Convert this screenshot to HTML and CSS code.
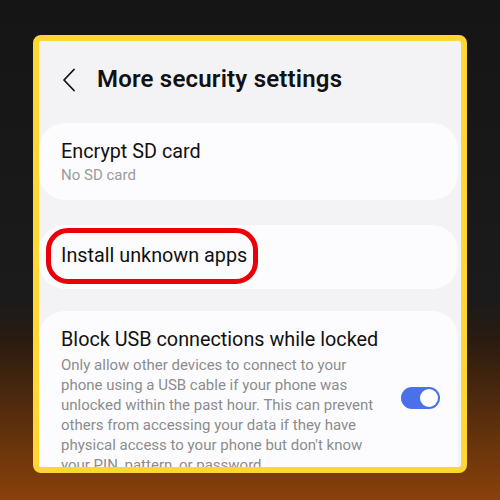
FILE: index.html
```html
<!DOCTYPE html>
<html>
<head>
  <title>More security settings</title>
  <link rel="stylesheet" href="styles.css">
</head>
<body>
  <div class="frame">
    <div class="screen">
      <div class="header">
        <svg class="back" width="14" height="24" viewBox="0 0 14 24">
          <path d="M12 1.5 L2 12 L12 22.5" fill="none" stroke="#111" stroke-width="1.8" stroke-linecap="round" stroke-linejoin="round"/>
        </svg>
        <h1>More security settings</h1>
      </div>

      <div class="card">
        <div class="item-title">Encrypt SD card</div>
        <div class="item-sub">No SD card</div>
      </div>

      <div class="card card-single">
        <div class="highlight">
          <div class="item-title">Install unknown apps</div>
        </div>
      </div>

      <div class="card card-last">
        <div class="row">
          <div class="text">
            <div class="item-title">Block USB connections while locked</div>
            <div class="item-desc">Only allow other devices to connect to your phone using a USB cable if your phone was unlocked within the past hour. This can prevent others from accessing your data if they have physical access to your phone but don't know your PIN, pattern, or password.</div>
          </div>
          <div class="switch"><span class="knob"></span></div>
        </div>
      </div>
    </div>
  </div>
</body>
</html>
```

FILE: styles.css
```css
html, body {
  margin: 0;
  height: 100%;
}
body {
  font-family: Roboto, "Noto Sans", Arial, sans-serif;
  background: linear-gradient(180deg, #151515 0%, #1b1b1b 60%, #2a1b10 68%, #572d0d 83%, #8a410a 100%);
  padding-top: 35px;
  padding-left: 33px;
  box-sizing: border-box;
}
.frame {
  width: 434px;
  height: 438px;
  box-sizing: border-box;
  border: 6.5px solid #ffd633;
  border-radius: 8px;
  overflow: hidden;
  background: #f3f3f5;
}
.screen {
  padding: 0 3px 0 0;
}
.header {
  display: flex;
  align-items: center;
  height: 76px;
  padding-left: 23px;
}
.back {
  display: block;
  margin-top: 2px;
}
.header h1 {
  margin: 0 0 0 21px;
  font-size: 24px;
  font-weight: 600;
  color: #111;
  letter-spacing: 0.2px;
}
.card {
  background: #fcfcfe;
  border-radius: 26px;
  margin-top: 6px;
  padding: 17px 22px 16px 22px;
}
.card-single {
  margin-top: 25px;
  padding: 3px 16px 5px 7px;
}
.card-last {
  margin-top: 22px;
  padding-top: 17px;
  padding-right: 18px;
}
.item-title {
  font-size: 19.8px;
  color: #111;
  line-height: 24px;
}
.item-sub {
  font-size: 15px;
  color: #9b9b9b;
  margin-top: 2px;
}
.highlight {
  display: inline-block;
  border: 5.5px solid #ec0008;
  border-radius: 22px;
  padding: 11px 6px 11px 10px;
}
.row {
  display: flex;
  align-items: center;
}
.text {
  flex: 1;
}
.item-desc {
  font-size: 15px;
  line-height: 20px;
  color: #8c8c8c;
  margin-top: 3px;
  padding-right: 6px;
}
.switch {
  position: relative;
  width: 39px;
  height: 22px;
  border-radius: 11px;
  background: #4a70ea;
  margin-left: 10px;
  margin-bottom: 8px;
}
.knob {
  position: absolute;
  right: 2px;
  top: 2px;
  width: 18px;
  height: 18px;
  border-radius: 50%;
  background: #fff;
}
```
